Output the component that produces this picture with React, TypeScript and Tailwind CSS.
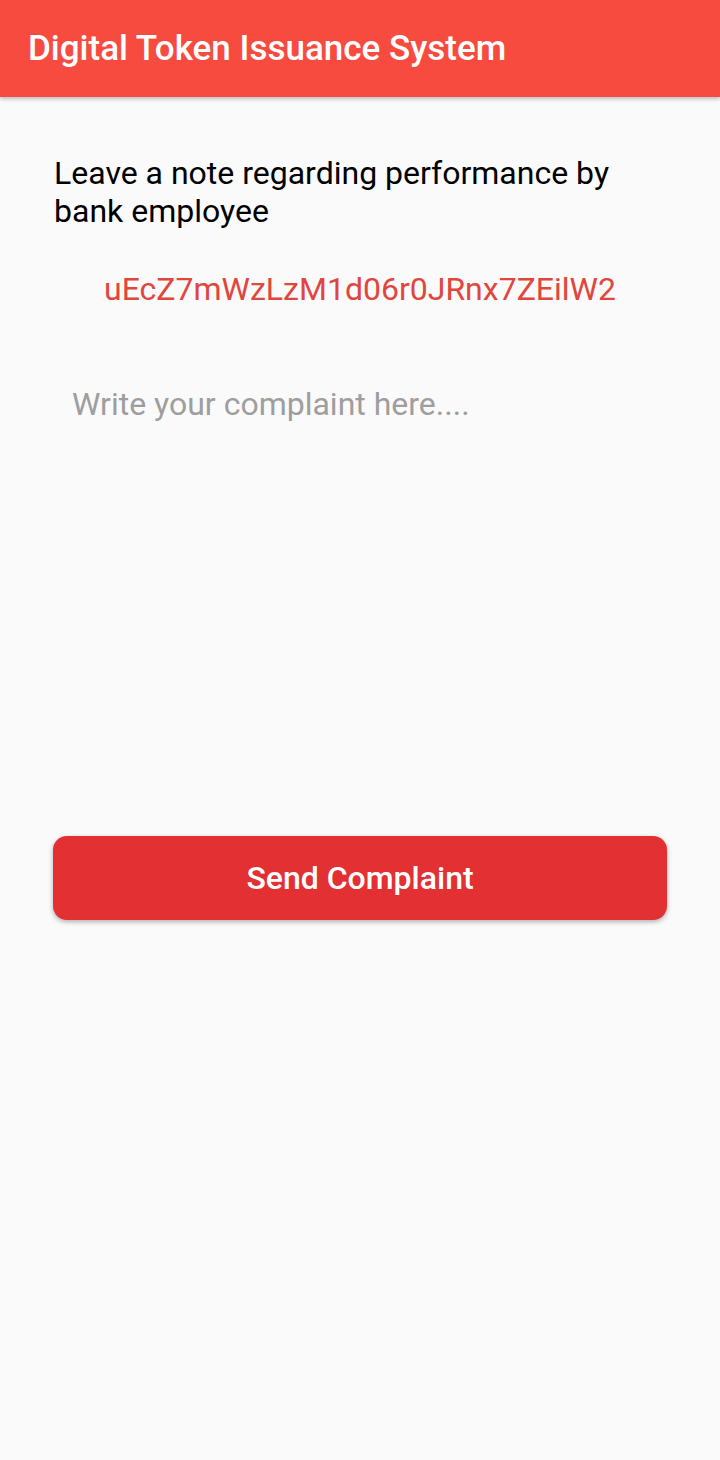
export default function App() {
  return (
    <div className="min-h-[1460px] w-[720px] bg-[#fafafa] font-['Roboto',sans-serif]">
      <header className="flex h-[97px] items-center bg-[#f84b3f] px-[28px] shadow-[0_2px_4px_rgba(0,0,0,0.25)]">
        <h1 className="text-[35px] font-medium leading-none text-white">Digital Token Issuance System</h1>
      </header>

      <main className="px-[54px] pt-[57px]">
        <p className="text-[32px] leading-[38px] text-black">
          Leave a note regarding performance by bank employee
        </p>
        <p className="mt-[40px] text-center text-[32px] leading-[38px] text-[#e0463d]">
          uEcZ7mWzLzM1d06r0JRnx7ZEilW2
        </p>
        <textarea
          className="mt-[75px] h-[432px] w-full resize-none bg-transparent px-[18px] text-[32px] leading-[42px] text-black outline-none placeholder:text-[#9e9e9e]"
          placeholder="Write your complaint here...."
        />
        <button className="mt-[14px] flex h-[84px] w-[614px] -ml-[1px] items-center justify-center rounded-[14px] bg-[#e33032] text-[32px] font-medium text-white shadow-[0_2px_5px_rgba(0,0,0,0.3)]">
          Send Complaint
        </button>
      </main>
    </div>
  )
}
